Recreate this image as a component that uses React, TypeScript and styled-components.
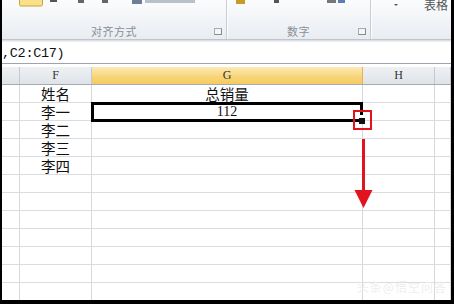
import styled, { createGlobalStyle } from "styled-components";

const GlobalStyle = createGlobalStyle`
  html, body {
    margin: 0;
    padding: 0;
    background: #000;
  }
`;

const Frame = styled.div`
  width: 454px;
  height: 304px;
  box-sizing: border-box;
  border-left: 2px solid #000;
  border-right: 3px solid #000;
  border-bottom: 4px solid #000;
  background: #fff;
  display: flex;
  flex-direction: column;
  overflow: hidden;
  font-family: "Noto Sans CJK SC", sans-serif;
`;

const Ribbon = styled.div`
  height: 39px;
  display: flex;
  background: linear-gradient(#fbfcfd, #eef1f5 70%, #e8ecf1);
  border-bottom: 1px solid #bfc5cd;
  box-shadow: 0 1px 0 #dde1e6, 0 2px 0 #eceff2;
  flex-shrink: 0;
`;

const Group = styled.div<{ $width: number }>`
  width: ${(p) => p.$width}px;
  flex-shrink: 0;
  display: flex;
  flex-direction: column;
  border-right: 1px solid #c9ced5;
  box-shadow: 1px 0 0 #fdfdfe;
`;

const GroupTop = styled.div`
  height: 24px;
  position: relative;
`;

const GroupFoot = styled.div`
  flex: 1;
  display: flex;
  align-items: center;
  justify-content: center;
  position: relative;
`;

const GroupLabel = styled.span`
  font-size: 11px;
  color: #8b8f96;
  letter-spacing: 0.5px;
  line-height: 12px;
  margin-top: -2px;
`;

const Launcher = styled.span<{ $right: number }>`
  position: absolute;
  right: ${(p) => p.$right}px;
  top: 4px;
  width: 6px;
  height: 5px;
  border: 1px solid #a9adb3;
  border-right-color: #888c92;
  border-bottom-color: #888c92;
  background: #f4f5f7;
`;

const FormulaBar = styled.div`
  margin-top: 2px;
  height: 21px;
  border-bottom: 1px solid #9da4ad;
  display: flex;
  align-items: center;
  flex-shrink: 0;
`;

const FormulaText = styled.span`
  font-family: "Liberation Mono", monospace;
  font-size: 13.5px;
  color: #111;
  margin-left: 0;
  margin-top: 2px;
  letter-spacing: -0.3px;
`;

const Sheet = styled.div`
  margin-top: 3px;
  position: relative;
  flex: 1;
  display: flex;
  flex-direction: column;
`;

const HeaderRow = styled.div`
  display: flex;
  height: 18px;
  flex-shrink: 0;
  border-bottom: 1px solid #a3abb5;
  box-sizing: border-box;
`;

const HeaderCell = styled.div<{ $w: number; $active?: boolean }>`
  width: ${(p) => p.$w}px;
  flex-shrink: 0;
  box-sizing: border-box;
  border-right: 1px solid ${(p) => (p.$active ? "#e9b44a" : "#c3c9d1")};
  background: ${(p) =>
    p.$active
      ? "linear-gradient(#fcebb6, #f8d57a 55%, #f6cb5e)"
      : "linear-gradient(#eef1f4, #dfe3e8)"};
  font-family: "Liberation Serif", serif;
  font-size: 12px;
  color: #333;
  display: flex;
  align-items: center;
  justify-content: center;
`;

const Row = styled.div`
  display: flex;
  height: 18px;
  flex-shrink: 0;
  box-sizing: border-box;
  border-bottom: 1px solid #dadcdf;
`;

const Cell = styled.div<{ $w: number; $serif?: boolean }>`
  width: ${(p) => p.$w}px;
  flex-shrink: 0;
  box-sizing: border-box;
  border-right: 1px solid #d6d8db;
  display: flex;
  align-items: center;
  justify-content: center;
  overflow: visible;
  font-family: ${(p) =>
    p.$serif ? `"Liberation Serif", serif` : `"Noto Sans CJK SC", sans-serif`};
  font-size: ${(p) => (p.$serif ? "14px" : "14.5px")};
  color: #111;
`;

const CellText = styled.span`
  display: block;
  height: 15px;
  line-height: 15px;
`;

const Selection = styled.div`
  position: absolute;
  left: 89px;
  top: 35px;
  width: 272px;
  height: 20px;
  box-sizing: border-box;
  border: 3px solid #000;
  pointer-events: none;
`;

const HandleGap = styled.div`
  position: absolute;
  left: 357px;
  top: 48px;
  width: 6px;
  height: 3px;
  background: #fff;
`;

const FillHandle = styled.div`
  position: absolute;
  left: 357px;
  top: 51px;
  width: 6px;
  height: 6px;
  background: #111;
`;

const Highlight = styled.div`
  position: absolute;
  left: 351px;
  top: 43px;
  width: 19px;
  height: 20px;
  box-sizing: border-box;
  border: 2px solid #e1141d;
`;

const Arrow = styled.svg`
  position: absolute;
  left: 350px;
  top: 72px;
`;

const Watermark = styled.span`
  position: absolute;
  right: 4px;
  bottom: 6px;
  font-size: 12px;
  color: rgba(235, 235, 235, 0.9);
  letter-spacing: 1px;
`;

const cols = [18, 72, 271, 72, 16];

const data: [string, string][] = [
  ["姓名", "总销量"],
  ["李一", "112"],
  ["李二", ""],
  ["李三", ""],
  ["李四", ""],
];

export default function App() {
  const rows = Array.from({ length: 12 }, (_, i) => data[i] ?? ["", ""]);
  return (
    <>
      <GlobalStyle />
      <Frame>
        <Ribbon>
          <Group $width={224}>
            <GroupTop>
              <svg width="224" height="24">
                <rect x="17.5" y="-4" width="23" height="10" rx="1.5" fill="#fbe08a" stroke="#c9a33d" />
                <rect x="48" y="0" width="7" height="2" fill="#555" />
                <rect x="76" y="0" width="6" height="3" fill="#666" />
                <rect x="100" y="0" width="6" height="3" fill="#666" />
                <rect x="130" y="0" width="10" height="4" fill="#6d7f95" />
                <rect x="143" y="0" width="50" height="3" fill="#b8c0ca" />
              </svg>
            </GroupTop>
            <GroupFoot>
              <GroupLabel>对齐方式</GroupLabel>
              <Launcher $right={4} />
            </GroupFoot>
          </Group>
          <Group $width={143}>
            <GroupTop>
              <svg width="143" height="24">
                <rect x="9" y="0" width="9" height="4" fill="#c79a2a" />
                <rect x="47" y="0" width="5" height="3" fill="#555" />
                <rect x="100" y="0" width="9" height="3" fill="#777" />
                <rect x="111" y="0" width="7" height="3" fill="#5a7fb0" />
              </svg>
            </GroupTop>
            <GroupFoot>
              <GroupLabel>数字</GroupLabel>
              <Launcher $right={4} />
            </GroupFoot>
          </Group>
          <Group $width={82}>
            <GroupTop>
              <svg width="82" height="24">
                <path d="M23 4 L27 4 L25 6 Z" fill="#555" />
                <text x="53" y="10" fontSize="12" fill="#555" fontFamily="Noto Sans CJK SC, sans-serif">
                  表格
                </text>
              </svg>
            </GroupTop>
          </Group>
        </Ribbon>
        <FormulaBar>
          <FormulaText>,C2:C17)</FormulaText>
        </FormulaBar>
        <Sheet>
          <HeaderRow>
            <HeaderCell $w={cols[0]} />
            <HeaderCell $w={cols[1]}>F</HeaderCell>
            <HeaderCell $w={cols[2]} $active>
              G
            </HeaderCell>
            <HeaderCell $w={cols[3]}>H</HeaderCell>
            <HeaderCell $w={cols[4]} />
          </HeaderRow>
          {rows.map(([name, total], i) => (
            <Row key={i}>
              <Cell $w={cols[0]} />
              <Cell $w={cols[1]}>{name && <CellText>{name}</CellText>}</Cell>
              <Cell $w={cols[2]} $serif={/^\d+$/.test(total)}>
                {total && <CellText>{total}</CellText>}
              </Cell>
              <Cell $w={cols[3]} />
              <Cell $w={cols[4]} />
            </Row>
          ))}
          <Selection />
          <HandleGap />
          <FillHandle />
          <Highlight />
          <Arrow width="22" height="70" viewBox="0 0 22 70">
            <rect x="10" y="0" width="3" height="54" fill="#e1141d" />
            <path d="M2.5 51 L20.5 51 L11.5 69 Z" fill="#e1141d" />
          </Arrow>
          <Watermark>头条@悟空问答</Watermark>
        </Sheet>
      </Frame>
    </>
  );
}
